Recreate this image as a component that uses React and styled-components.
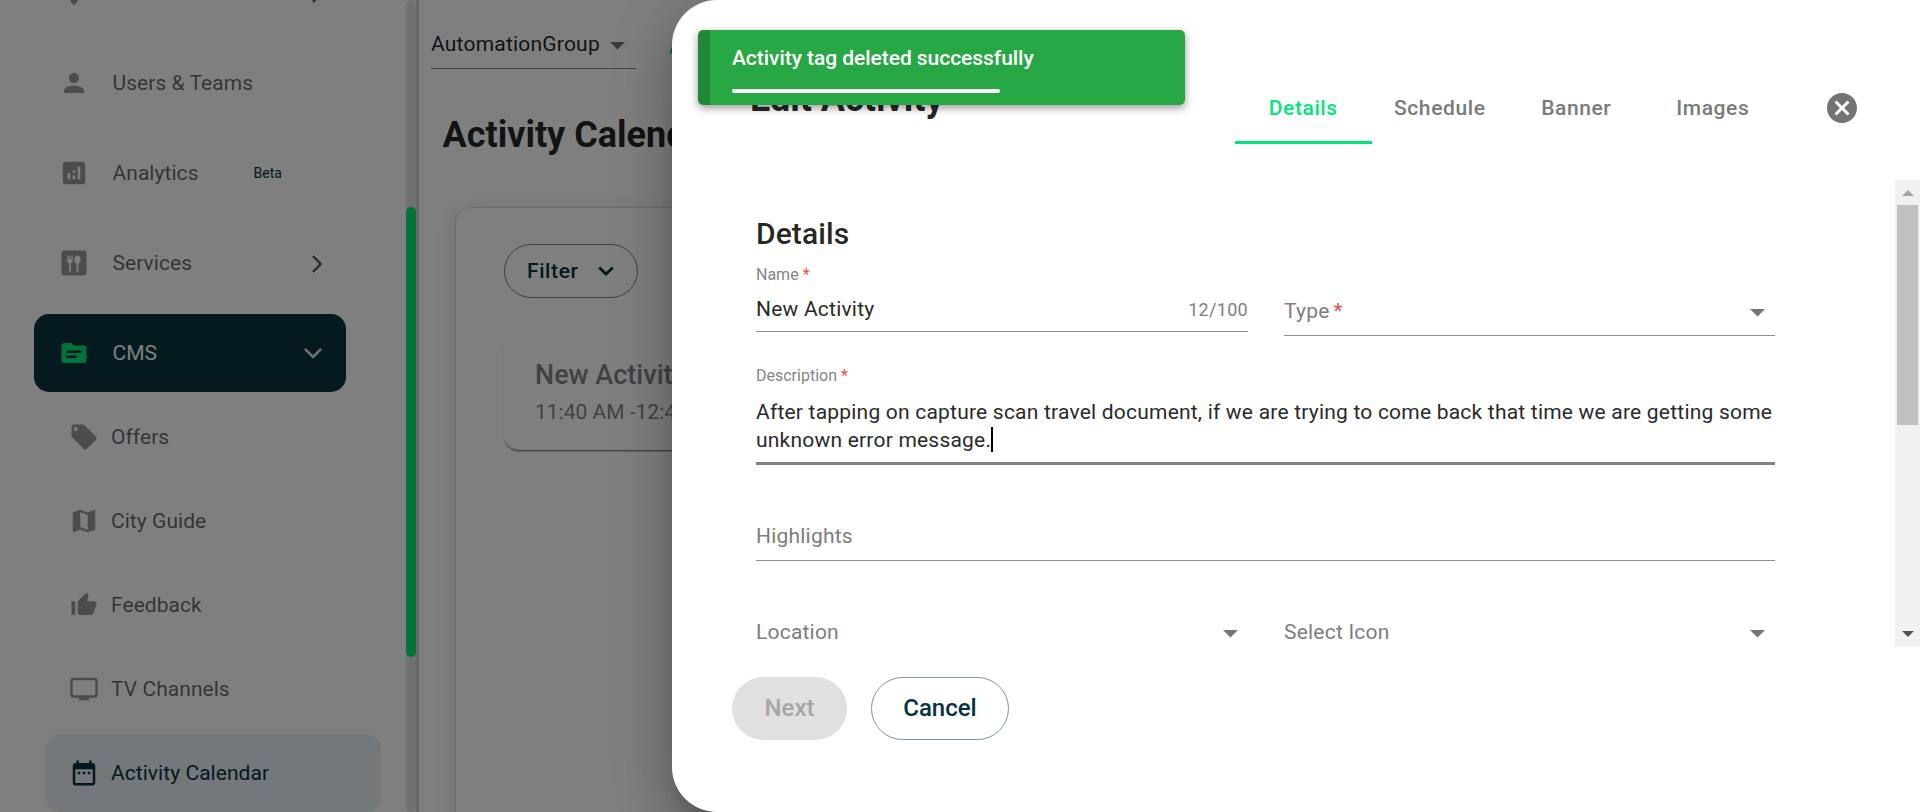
import React from "react";
import styled, { createGlobalStyle, css } from "styled-components";
import {
  MdLocationOn, MdPerson, MdAnalytics, MdDining, MdSource, MdLocalOffer,
  MdMap, MdThumbUpAlt, MdTv, MdDateRange, MdCancel,
} from "react-icons/md";

const Global = createGlobalStyle`
  *, *::before, *::after { box-sizing: border-box; }
  body { margin: 0; background: #fff; overflow: hidden; }
  body, button { font-family: Roboto, "Liberation Sans", sans-serif; }
`;

const Page = styled.div`
  position: relative;
  display: flex;
  width: 1920px;
  height: 812px;
  overflow: hidden;
  font-size: 21px;
  letter-spacing: 0.21px;
  color: rgba(0, 0, 0, 0.87);
`;

/* ---------- sidebar ---------- */

const Sidebar = styled.aside`
  display: flex;
  flex: none;
  width: 419px;
  height: 812px;
  border-right: 3px solid #d0d0d0;
  letter-spacing: 0.05px;
`;

const Nav = styled.nav`
  flex: 1;
  height: 812px;
  overflow: hidden;
`;

const MainItems = styled.div`
  display: flex;
  flex-direction: column;
  gap: 12px;
  margin-top: -46px;
  padding-left: 34px;
`;

const SubItems = styled.div`
  display: flex;
  flex-direction: column;
  gap: 6px;
  margin-top: 6px;
  padding-left: 45px;
`;

const NavRow = styled.div`
  display: flex;
  flex: none;
  align-items: center;
  height: 78px;
  border-radius: 15px;
  padding: 0 24px;
  color: rgba(0, 0, 0, 0.6);
  svg { flex: none; }
`;

const MainRow = styled(NavRow)`
  width: 312px;
  gap: 24px;
  padding-left: 24.5px;
  ${(p) => p.$open && css`
    background: #09343e;
    color: #fff;
    letter-spacing: 0;
  `}
`;

const SubRow = styled(NavRow)`
  width: 336px;
  gap: 12px;
  ${(p) => p.$active && css`
    background: #e8f1f6;
    color: #05333f;
  `}
`;

const NavLabel = styled.span`
  line-height: 30px;
  white-space: nowrap;
`;

const Beta = styled.span`
  margin-left: 31px;
  font-size: 14px;
  letter-spacing: 0;
  color: #05333f;
`;

const Chevron = styled.span`
  display: flex;
  margin-left: auto;
  margin-top: 1px;
  margin-right: ${(p) => p.$inset || 0}px;
  color: ${(p) => p.$color || "#555"};
`;

const Track = styled.div`
  width: 10px;
  height: 812px;
  padding-top: 207px;
  border-radius: 5px;
  background: #e2e2e2;
`;

const Thumb = styled.div`
  height: 450px;
  border-radius: 5px;
  background: #00e67a;
`;

/* ---------- main page ---------- */

const Main = styled.main`
  flex: 1;
  min-width: 0;
`;

const TopBar = styled.div`
  display: flex;
  height: 69px;
  padding-left: 12px;
`;

const GroupSelect = styled.div`
  display: flex;
  align-items: center;
  justify-content: space-between;
  width: 205px;
  padding: 19px 11px 0 0;
  border-bottom: 1px solid #8c8c8c;
`;

const Crumb = styled.span`
  margin-left: 33px;
  padding-top: 31px;
  line-height: 30px;
  color: #00c766;
`;

const PageTitle = styled.h1`
  margin: 46px 0 0 23.5px;
  font-size: 36px;
  line-height: 40px;
  font-weight: 700;
  letter-spacing: 0;
  white-space: nowrap;
`;

const Panel = styled.section`
  height: 700px;
  margin: 52px 0 0 36px;
  padding: 36px 48px;
  border: 1px solid #d6d6d6;
  border-radius: 15px;
  box-shadow: 0 6px 24px rgba(0, 0, 0, 0.14);
`;

const FilterButton = styled.button`
  display: flex;
  align-items: center;
  justify-content: space-between;
  width: 134px;
  height: 54px;
  padding: 0 23px 0 22px;
  border: 1px solid #6f878d;
  border-radius: 27px;
  background: none;
  color: #05333f;
  font-size: 21px;
  font-weight: 500;
  letter-spacing: 0.6px;
`;

const EventCard = styled.article`
  height: 116px;
  margin-top: 36px;
  padding: 25px 31px;
  border-radius: 15px;
  box-shadow: 0 2px 2px -1px rgba(0, 0, 0, 0.65);
  color: #858585;
  white-space: nowrap;
`;

const EventName = styled.div`
  font-size: 27px;
  line-height: 32px;
  font-weight: 500;
  letter-spacing: 0;
`;

const EventTime = styled.div`
  margin-top: 6px;
  font-size: 21px;
  line-height: 30px;
  letter-spacing: 0;
`;

/* ---------- dialog ---------- */

const Backdrop = styled.div`
  position: absolute;
  inset: 0;
  background: rgba(0, 0, 0, 0.5);
`;

const Dialog = styled.div`
  position: absolute;
  top: 0;
  right: 0;
  display: flex;
  flex-direction: column;
  width: 1248px;
  height: 812px;
  border-radius: 45px 0 0 45px;
  background: #fff;
  box-shadow: 0 14px 19px -9px rgba(0, 0, 0, 0.2), 0 30px 48px 4px rgba(0, 0, 0, 0.14), 0 11px 58px 10px rgba(0, 0, 0, 0.12);
`;

const DialogHeader = styled.header`
  display: flex;
  height: 180px;
  padding: 72px 60px 36px 78px;
`;

const DialogTitle = styled.h2`
  margin: 6px 0 0;
  font-size: 36px;
  line-height: 42px;
  font-weight: 700;
  letter-spacing: 0;
`;

const Tabs = styled.div`
  display: flex;
  margin-left: auto;
`;

const Tab = styled.div`
  width: 136.5px;
  height: 72px;
  text-align: center;
  line-height: 72px;
  font-size: 21px;
  font-weight: 500;
  letter-spacing: 0.6px;
  color: ${(p) => (p.$active ? "#00e67a" : "#7a7a7a")};
  box-shadow: ${(p) => (p.$active ? "inset 0 -3px #00e67a" : "none")};
`;

const CloseIcon = styled(MdCancel)`
  margin: 18px 0 0 43px;
  color: #737373;
`;

const Scroller = styled.div`
  display: flex;
  justify-content: space-between;
  height: 467px;
  overflow: hidden;
`;

const Form = styled.div`
  width: 1103px;
  padding: 36px 0 0 84px;
`;

const FormTitle = styled.h3`
  margin: 0 0 12px;
  font-size: 30px;
  line-height: 36px;
  font-weight: 500;
  letter-spacing: 0.1px;
`;

const FieldRow = styled.div`
  display: grid;
  grid-template-columns: 492px 491px;
  column-gap: 36px;
  align-items: start;
  margin-top: ${(p) => p.$top || 0}px;
`;

const Field = styled.div`
  padding-top: ${(p) => p.$top || 0}px;
`;

const Label = styled.div`
  font-size: 16px;
  line-height: 20px;
  letter-spacing: 0;
  color: #858585;
`;

const Star = styled.span`
  margin-left: 4px;
  color: #ea5044;
`;

const InputLine = styled.div`
  display: flex;
  align-items: center;
  justify-content: space-between;
  margin-top: ${(p) => p.$top || 0}px;
  padding-bottom: ${(p) => p.$bottom}px;
  border-bottom: 1px solid #8f8f8f;
  line-height: 30px;
  color: ${(p) => (p.$filled ? "#2a2a2a" : "#7d7d7d")};
  svg { margin-right: 10px; }
`;

const Counter = styled.span`
  padding-top: 2px;
  line-height: 28px;
  font-size: 18px;
  letter-spacing: 0.3px;
  color: #808080;
`;

const TextArea = styled.div`
  margin-top: 12px;
  padding-bottom: 8px;
  border-bottom: 3px solid #808080;
  line-height: 28px;
  color: #2a2a2a;
  white-space: nowrap;
`;

const Caret = styled.span`
  display: inline-block;
  width: 2px;
  height: 25px;
  vertical-align: 1px;
  margin: -6px 0;
  background: #000;
`;

const ScrollBar = styled.div`
  display: flex;
  flex-direction: column;
  align-items: center;
  width: 25px;
  height: 467px;
  background: #f1f1f1;
`;

const ScrollArrow = styled.div`
  display: flex;
  align-items: center;
  justify-content: center;
  height: 25px;
  padding: ${(p) => (p.$down ? "0 0 1px" : "1px 0 0")};
  color: ${(p) => p.$color};
`;

const ScrollThumb = styled.div`
  width: 21px;
  height: 220px;
  margin-bottom: auto;
  background: #c1c1c1;
`;

const Footer = styled.footer`
  display: flex;
  gap: 24px;
  padding: 30px 0 0 60px;
`;

const ActionButton = styled.button`
  width: ${(p) => p.$width}px;
  height: 63px;
  border: ${(p) => (p.$disabled ? "none" : "1px solid #7d969c")};
  border-radius: 32px;
  padding: 0 0 1px;
  background: ${(p) => (p.$disabled ? "#e0e0e0" : "#fff")};
  color: ${(p) => (p.$disabled ? "#a6a6a6" : "#05333f")};
  font-size: 24px;
  font-weight: 500;
  letter-spacing: 0;
`;

/* ---------- toast ---------- */

const Toast = styled.div`
  position: absolute;
  top: 30px;
  left: 698px;
  width: 487px;
  height: 75px;
  padding: 13px 0 0 34px;
  border-radius: 5px;
  background: linear-gradient(to right, #218838 12px, #28a745 12px);
  box-shadow: 0 3px 8px rgba(0, 0, 0, 0.4);
  color: #fff;
  font-weight: 500;
  letter-spacing: -0.05px;
  line-height: 30px;
`;

const Progress = styled.div`
  width: 268px;
  height: 4px;
  margin-top: 16px;
  border-radius: 2px;
  background: #fff;
`;

const ArrowSvg = styled.svg`
  flex: none;
  margin-top: 4px;
`;

const RightChevron = () => (
  <svg width="10" height="18" viewBox="0 0 10 18" fill="none" stroke="currentColor" strokeWidth="2.4">
    <path d="M1 1l7.6 8L1 17" />
  </svg>
);

const DownChevron = () => (
  <svg width="18" height="11" viewBox="0 0 18 11" fill="none" stroke="currentColor" strokeWidth="2.6" strokeLinecap="round" strokeLinejoin="round">
    <path d="M1.7 1.6L9 9l7.3-7.4" />
  </svg>
);

const FilterChevron = () => (
  <svg width="16" height="10" viewBox="0 0 16 10" fill="none" stroke="currentColor" strokeWidth="2.8">
    <path d="M1.2 1.4L8 8l6.8-6.6" />
  </svg>
);

const DropArrow = () => (
  <ArrowSvg width="15" height="8" viewBox="0 0 15 8" fill="#757575">
    <path d="M0 0h15L7.5 7.5z" />
  </ArrowSvg>
);

const SmallArrow = ({ up }) => (
  <svg width="12" height="6" viewBox="0 0 12 6" fill="currentColor">
    <path d={up ? "M0 6h12L6 0z" : "M0 0h12L6 6z"} />
  </svg>
);

const grey = "#999";

const subItems = [
  { label: "Offers", Icon: MdLocalOffer },
  { label: "City Guide", Icon: MdMap },
  { label: "Feedback", Icon: MdThumbUpAlt },
  { label: "TV Channels", Icon: MdTv },
  { label: "Activity Calendar", Icon: MdDateRange, active: true },
];

export default function App() {
  return (
    <Page>
      <Global />
      <Sidebar>
        <Nav>
          <MainItems>
            <MainRow>
              <MdLocationOn size={30} color={grey} />
              <Chevron $inset={0.5}><RightChevron /></Chevron>
            </MainRow>
            <MainRow>
              <MdPerson size={30} color={grey} />
              <NavLabel>Users &amp; Teams</NavLabel>
            </MainRow>
            <MainRow>
              <MdAnalytics size={30} color={grey} />
              <NavLabel>Analytics</NavLabel>
              <Beta>Beta</Beta>
            </MainRow>
            <MainRow>
              <MdDining size={30} color={grey} />
              <NavLabel>Services</NavLabel>
              <Chevron $inset={0.5}><RightChevron /></Chevron>
            </MainRow>
            <MainRow $open>
              <MdSource size={30} color="#00e67a" />
              <NavLabel>CMS</NavLabel>
              <Chevron $color="#ddd"><DownChevron /></Chevron>
            </MainRow>
          </MainItems>
          <SubItems>
            {subItems.map(({ label, Icon, active }) => (
              <SubRow key={label} $active={active}>
                <Icon size={30} color={active ? "#05333f" : grey} />
                <NavLabel>{label}</NavLabel>
              </SubRow>
            ))}
          </SubItems>
        </Nav>
        <Track><Thumb /></Track>
      </Sidebar>

      <Main>
        <TopBar>
          <GroupSelect>AutomationGroup<DropArrow /></GroupSelect>
          <Crumb>A</Crumb>
        </TopBar>
        <PageTitle>Activity Calendar</PageTitle>
        <Panel>
          <FilterButton>Filter<FilterChevron /></FilterButton>
          <EventCard>
            <EventName>New Activity</EventName>
            <EventTime>11:40 AM -12:40 PM</EventTime>
          </EventCard>
        </Panel>
      </Main>

      <Backdrop />

      <Dialog>
        <DialogHeader>
          <DialogTitle>Edit Activity</DialogTitle>
          <Tabs>
            <Tab $active>Details</Tab>
            <Tab>Schedule</Tab>
            <Tab>Banner</Tab>
            <Tab>Images</Tab>
          </Tabs>
          <CloseIcon size={36} />
        </DialogHeader>
        <Scroller>
          <Form>
            <FormTitle>Details</FormTitle>
            <FieldRow>
              <Field $top={1}>
                <Label>Name<Star>*</Star></Label>
                <InputLine $top={9} $bottom={7} $filled>
                  New Activity<Counter>12/100</Counter>
                </InputLine>
              </Field>
              <InputLine $top={32} $bottom={9}>
                <span>Type<Star>*</Star></span>
                <DropArrow />
              </InputLine>
            </FieldRow>
            <Field $top={30}>
              <Label>Description<Star>*</Star></Label>
              <TextArea>
                After tapping on capture scan travel document, if we are trying to come back that time we are getting some
                <br />
                unknown error message.<Caret />
              </TextArea>
            </Field>
            <InputLine $top={56} $bottom={9}>Highlights</InputLine>
            <FieldRow $top={56}>
              <InputLine $bottom={9}>Location<DropArrow /></InputLine>
              <InputLine $bottom={9}>Select Icon<DropArrow /></InputLine>
            </FieldRow>
          </Form>
          <ScrollBar>
            <ScrollArrow $color="#a3a3a3"><SmallArrow up /></ScrollArrow>
            <ScrollThumb />
            <ScrollArrow $color="#505050" $down><SmallArrow /></ScrollArrow>
          </ScrollBar>
        </Scroller>
        <Footer>
          <ActionButton $width={115} $disabled>Next</ActionButton>
          <ActionButton $width={138}>Cancel</ActionButton>
        </Footer>
      </Dialog>

      <Toast>
        Activity tag deleted successfully
        <Progress />
      </Toast>
    </Page>
  );
}
